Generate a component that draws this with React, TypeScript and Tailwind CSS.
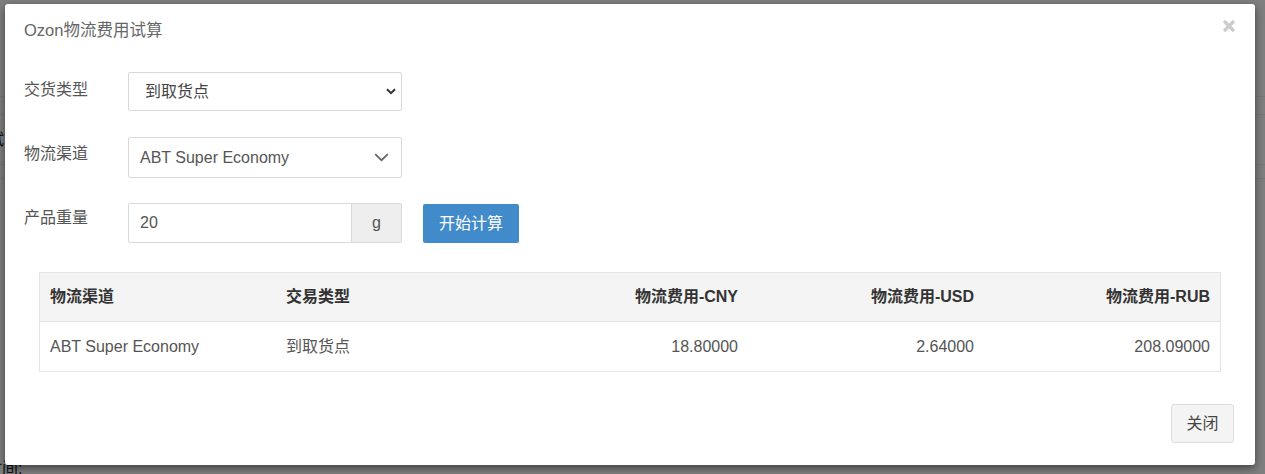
import React from "react";

const FONT = '"Liberation Sans", "Noto Sans CJK SC", Arial, sans-serif';

function Chevron1() {
  return (
    <svg width="10" height="7" viewBox="0 0 10 7" className="shrink-0">
      <path d="M1 1.2 L5 5.2 L9 1.2" fill="none" stroke="#333" strokeWidth="2" />
    </svg>
  );
}

function Chevron2() {
  return (
    <svg width="15" height="9" viewBox="0 0 15 9" className="shrink-0">
      <path d="M1.2 1.2 L7.5 7.2 L13.8 1.2" fill="none" stroke="#666" strokeWidth="1.8" />
    </svg>
  );
}

function CloseX() {
  return (
    <svg width="14" height="14" viewBox="0 0 14 14" className="shrink-0">
      <path d="M2 2 L12 12 M12 2 L2 12" fill="none" stroke="#cccccc" strokeWidth="3.2" strokeLinecap="butt" />
    </svg>
  );
}

export default function App() {
  return (
    <div
      className="relative w-full h-[474px] overflow-hidden bg-white text-[16px]"
      style={{ fontFamily: FONT }}
    >
      {/* background page */}
      <div className="flex flex-col text-[#222]">
        <div className="h-[97px] border-b border-[#eeeeee]" />
        <div className="h-[18px] border-b border-[#eeeeee]" />
        <div className="h-[50px] flex items-center -ml-[12px] border-b border-[#eeeeee]">试算</div>
        <div className="h-[14px] border-b border-[#eeeeee]" />
        <div className="h-[40px] flex items-center -ml-[10px]">z</div>
        <div className="h-[240px]" />
        <div className="h-[20px] flex items-center -ml-[14px]">时间:</div>
      </div>

      {/* backdrop */}
      <div className="absolute inset-0 bg-black/50" />

      {/* modal */}
      <div className="absolute left-[5px] top-[4px] w-[1250px] h-[461px] bg-white rounded-[3px] shadow-[0_3px_9px_rgba(0,0,0,0.5)] flex flex-col">
        {/* header */}
        <div className="flex items-start justify-between pl-[19px] pr-[19px] pt-[14px] h-[52px]">
          <div className="text-[16.5px] leading-[24px] text-[#666]">Ozon物流费用试算</div>
          <div className="pt-[1px]">
            <CloseX />
          </div>
        </div>

        {/* body */}
        <div className="flex flex-col pt-[16px] pl-[19px]">
          <div className="flex items-start">
            <div className="w-[104px] pt-[6px] leading-[24px] text-[#555]">交货类型</div>
            <div className="w-[274px] h-[39px] border border-[#d9d9d9] rounded-[2px] flex items-center justify-between pl-[16px] pr-[5px] text-[#444]">
              <span>到取货点</span>
              <Chevron1 />
            </div>
          </div>

          <div className="flex items-start mt-[26px]">
            <div className="w-[104px] pt-[5px] leading-[24px] text-[#555]">物流渠道</div>
            <div className="w-[274px] h-[41px] border border-[#d9d9d9] rounded-[2px] flex items-center justify-between pl-[11px] pr-[12px] text-[#555]">
              <span>ABT Super Economy</span>
              <Chevron2 />
            </div>
          </div>

          <div className="flex items-start mt-[25px]">
            <div className="w-[104px] pt-[3px] leading-[24px] text-[#555]">产品重量</div>
            <div className="flex w-[274px] h-[40px]">
              <div className="flex-1 border border-[#d9d9d9] rounded-l-[2px] flex items-center pl-[11px] text-[#555]">20</div>
              <div className="w-[50px] border border-l-0 border-[#d9d9d9] bg-[#eeeeee] rounded-r-[2px] flex items-center justify-center text-[#555]">g</div>
            </div>
            <div className="ml-[21px] mt-[1px] w-[96px] h-[39px] bg-[#428bca] rounded-[2px] text-white flex items-center justify-center">开始计算</div>
          </div>
        </div>

        {/* table */}
        <div className="mx-[34px] mt-[29px] border border-[#e5e5e5]">
          <div className="grid grid-cols-5 h-[49px] bg-[#f4f4f4] border-b border-[#e5e5e5] font-bold text-[#333] items-center">
            <div className="pl-[10px]">物流渠道</div>
            <div className="pl-[10px]">交易类型</div>
            <div className="pr-[10px] text-right">物流费用-CNY</div>
            <div className="pr-[10px] text-right">物流费用-USD</div>
            <div className="pr-[10px] text-right">物流费用-RUB</div>
          </div>
          <div className="grid grid-cols-5 h-[49px] text-[#555] items-center">
            <div className="pl-[10px]">ABT Super Economy</div>
            <div className="pl-[10px]">到取货点</div>
            <div className="pr-[10px] text-right">18.80000</div>
            <div className="pr-[10px] text-right">2.64000</div>
            <div className="pr-[10px] text-right">208.09000</div>
          </div>
        </div>

        {/* footer */}
        <div className="flex justify-end pr-[21px] mt-[32px]">
          <div className="w-[63px] h-[39px] bg-[#f4f4f4] border border-[#dddddd] rounded-[3px] flex items-center justify-center text-[#444]">关闭</div>
        </div>
      </div>
    </div>
  );
}
